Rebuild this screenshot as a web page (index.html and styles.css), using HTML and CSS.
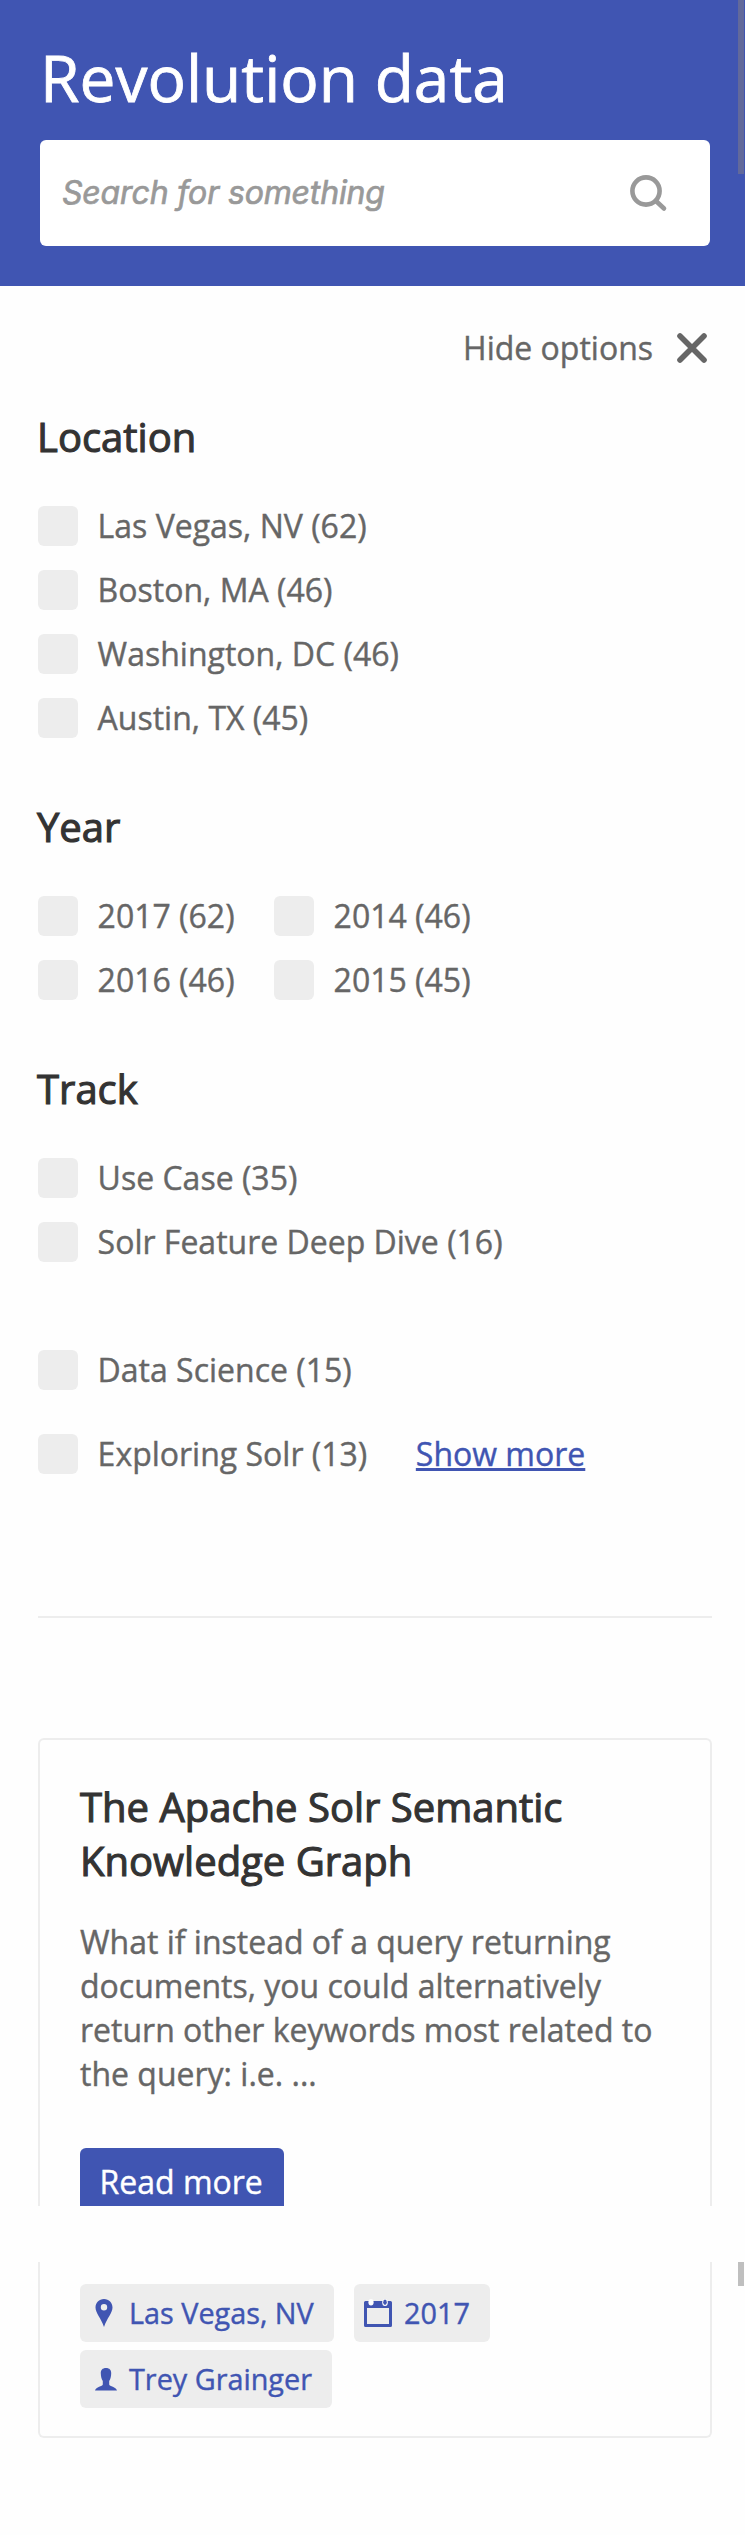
FILE: index.html
```html
<!DOCTYPE html>
<html lang="en">
<head>
<meta charset="utf-8">
<title>Revolution data</title>
<link rel="stylesheet" href="styles.css">
</head>
<body>
<div class="scrollbar"></div>
<header class="header">
  <h1 class="site-title">Revolution data</h1>
  <div class="search">
    <span class="placeholder">Search for something</span>
    <svg class="search-icon" width="38" height="38" viewBox="0 0 38 38"><circle cx="16" cy="16" r="13.6"/><path d="M26 26l8 7.500"/></svg>
  </div>
</header>
<main class="content">
  <div class="toggle">
    <span>Hide options</span>
    <svg class="close-icon" width="30" height="30" viewBox="0 0 30 30"><path d="M3 3l24 24M27 3L3 27"/></svg>
  </div>
  <section class="facet">
    <h2 class="heading">Location</h2>
    <label class="option"><span class="box"></span><span class="label">Las Vegas, NV (62)</span></label>
    <label class="option"><span class="box"></span><span class="label">Boston, MA (46)</span></label>
    <label class="option"><span class="box"></span><span class="label">Washington, DC (46)</span></label>
    <label class="option"><span class="box"></span><span class="label">Austin, TX (45)</span></label>
  </section>
  <section class="facet">
    <h2 class="heading">Year</h2>
    <div class="years">
      <label class="option"><span class="box"></span><span class="label">2017 (62)</span></label>
      <label class="option"><span class="box"></span><span class="label">2014 (46)</span></label>
      <label class="option"><span class="box"></span><span class="label">2016 (46)</span></label>
      <label class="option"><span class="box"></span><span class="label">2015 (45)</span></label>
    </div>
  </section>
  <section class="facet">
    <h2 class="heading">Track</h2>
    <label class="option"><span class="box"></span><span class="label">Use Case (35)</span></label>
    <label class="option spaced"><span class="box"></span><span class="label">Solr Feature Deep Dive (16)</span></label>
    <label class="option"><span class="box"></span><span class="label">Data Science (15)</span></label>
    <div class="last-row">
      <label class="option"><span class="box"></span><span class="label">Exploring Solr (13)</span></label>
      <a class="more">Show more</a>
    </div>
  </section>
  <hr class="divider">
  <article>
    <div class="card-top">
      <h2 class="card-title">The Apache Solr Semantic Knowledge Graph</h2>
      <p class="summary">What if instead of a query returning documents, you could alternatively return other keywords most related to the query: i.e. ...</p>
      <a class="button">Read more</a>
    </div>
    <div class="card-bottom">
      <div class="tag place">
        <svg width="18" height="28" viewBox="0 0 18 28"><path fill-rule="evenodd" d="M9 0C4 0 .5 3.700.5 8.500C.5 14 6 19 9 28C12 19 17.500 14 17.500 8.500C17.500 3.700 14 0 9 0ZM9 5a3.200 3.200 0 1 1 0 6.400a3.200 3.200 0 0 1 0-6.400Z"/></svg>
        <span>Las Vegas, NV</span>
      </div>
      <div class="tag date">
        <svg width="28" height="28" viewBox="0 0 28 28"><path fill-rule="evenodd" d="M1.500 2H26.500Q28 2 28 3.500V26.500Q28 28 26.500 28H1.500Q0 28 0 26.500V3.500Q0 2 1.500 2ZM3 9V25H25V9Z"/><ellipse class="ring" cx="7" cy="3.300" rx="2.600" ry="3.300"/><ellipse class="ring" cx="21" cy="3.500" rx="2.800" ry="3.500"/><ellipse cx="21" cy="3.300" rx="1.800" ry="2.800"/></svg>
        <span>2017</span>
      </div>
      <div class="tag person">
        <svg width="22" height="23" viewBox="0 0 22 23"><path d="M11 0C7.500 0 5.600 2.200 5.800 5.500C5.900 8.500 6.500 11 7.800 13V16.500C7.500 18.500 1 18.800 0 22.500H22C21 18.800 14.500 18.500 14.200 16.500V13C15.500 11 16.100 8.500 16.200 5.500C16.400 2.200 14.500 0 11 0Z"/></svg>
        <span>Trey Grainger</span>
      </div>
    </div>
  </article>
  <div class="scroll-stub"></div>
</main>
</body>
</html>
```
FILE: styles.css
```css
* { box-sizing: border-box; }
body {
  position: relative;
  margin: 0;
  width: 745px;
  height: 2535px;
  overflow: hidden;
  background: #fefefe;
  color: #666;
  font: 32px/44px "Open Sans", sans-serif;
  -webkit-text-stroke: .4px currentColor;
}
.header {
  height: 286px;
  padding: 36px 35px 0 40px;
  background: #4055b2;
}
.site-title {
  margin: 0;
  height: 104px;
  font-size: 64px;
  font-weight: 400;
  line-height: 84px;
  color: #fff;
  -webkit-text-stroke: .8px #fff;
}
.search {
  display: flex;
  align-items: center;
  justify-content: space-between;
  height: 106px;
  padding: 0 42px 0 22px;
  border-radius: 6px;
  background: #fff;
}
.placeholder {
  font-family: Inter, sans-serif;
  font-style: italic;
  letter-spacing: -.15px;
  color: #999;
  -webkit-text-stroke: .7px #999;
}
.search-icon { fill: none; stroke: #999; stroke-width: 4.600; stroke-linecap: round; margin-top: 2px; }
.close-icon { fill: none; stroke: #666; stroke-width: 5.600; stroke-linecap: round; }
.scrollbar, .scroll-stub { position: absolute; right: 1px; width: 6px; }
.scrollbar { top: 0; height: 174px; background: #62699b; }
.scroll-stub { top: 2262px; height: 24px; background: #bfbfbf; }
.content { padding: 40px 33px 0 38px; }
.toggle {
  display: flex;
  align-items: center;
  justify-content: flex-end;
  gap: 24px;
  height: 44px;
  padding-right: 5px;
}
.facet { padding-top: 40px; }
.facet + .facet { padding-top: 50px; }
.heading, .card-title {
  margin: 0;
  font-size: 40px;
  font-weight: 400;
  line-height: 54px;
  color: #333;
  -webkit-text-stroke: 1.100px #333;
}
.heading { margin-bottom: 30px; text-indent: -1px; }
.option { display: flex; align-items: center; gap: 19.6px; height: 64px; }
.box { width: 40px; height: 40px; border-radius: 6px; background: #ededed; }
.years { display: grid; grid-template-columns: 236px 236px; }
.spaced { margin-bottom: 64px; }
.last-row { display: flex; align-items: center; gap: 48.6px; margin-top: 20px; }
.more { color: #4055b2; text-decoration: underline; }
.divider { height: 2px; margin: 130px 0 120px; border: 0; background: #ededed; }
.card-top {
  height: 468px;
  padding: 40px 40px 0;
  border: 2px solid #ededed;
  border-bottom: 0;
  border-radius: 6px 6px 0 0;
  overflow: hidden;
}
.summary { margin: 32px 0 52px; }
.button {
  display: block;
  width: 204px;
  height: 80px;
  padding: 12px 0 0 19.5px;
  border-radius: 6px;
  background: #4055b2;
  color: #fff;
}
.card-bottom {
  display: flex;
  flex-wrap: wrap;
  align-content: flex-start;
  gap: 8px 20px;
  height: 176px;
  margin-top: 56px;
  padding: 22px 40px 0;
  border: 2px solid #ededed;
  border-top: 0;
  border-radius: 0 0 6px 6px;
}
.tag {
  display: flex;
  align-items: center;
  height: 58px;
  border-radius: 6px;
  background: #ededed;
  color: #4055b2;
  font-size: 28.8px;
}
.tag svg { fill: currentColor; }
.tag .ring { fill: #fefefe; }
.place { width: 254px; padding-left: 15px; gap: 16px; }
.date { width: 136px; padding-left: 10px; gap: 12px; }
.person { width: 252px; padding-left: 15px; gap: 12px; }
```
